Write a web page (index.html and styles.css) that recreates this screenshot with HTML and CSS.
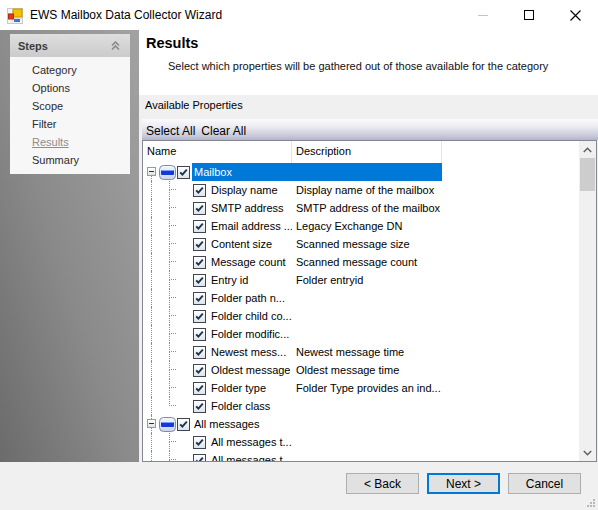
FILE: index.html
```html
<!DOCTYPE html>
<html>
<head>
<meta charset="utf-8">
<title>EWS Mailbox Data Collector Wizard</title>
<link rel="stylesheet" href="styles.css">
</head>
<body>
<div class="window">
  <div class="titlebar">
    <svg class="appicon" width="16" height="16" viewBox="0 0 16 16">
      <rect x="0.5" y="0.5" width="15" height="15" fill="#f4f4f4" stroke="#c9c9c9"/>
      <path d="M0.5 5.5H15.5M0.5 10.5H15.5M5.5 0.5V15.5M10.5 0.5V15.5" stroke="#dcdcdc"/>
      <rect x="6" y="1" width="9" height="8" fill="#f2c200" stroke="#c99700"/>
      <rect x="1.5" y="6" width="5" height="5" fill="#e03a1e" stroke="#b32a12"/>
      <rect x="7" y="11" width="6" height="3" fill="#3a78d8"/>
    </svg>
    <span class="title">EWS Mailbox Data Collector Wizard</span>
    <div class="controls">
      <span class="ctl"><svg width="10" height="10" viewBox="0 0 10 10"><path d="M0 5.5H10" stroke="#c4c4c4"/></svg></span>
      <span class="ctl"><svg width="10" height="10" viewBox="0 0 10 10"><rect x="0.5" y="0.5" width="9" height="9" fill="none" stroke="#000"/></svg></span>
      <span class="ctl"><svg width="11" height="11" viewBox="0 0 11 11"><path d="M0.5 0.5L10.5 10.5M10.5 0.5L0.5 10.5" stroke="#000" stroke-width="1.1"/></svg></span>
    </div>
  </div>

  <div class="main">
    <aside class="sidebar">
      <div class="steps">
        <div class="steps-head">
          <span>Steps</span>
          <svg width="9" height="10" viewBox="0 0 9 10"><path d="M1 4.5L4.5 1L8 4.5M1 8.5L4.5 5L8 8.5" fill="none" stroke="#8a8a8a" stroke-width="1.6"/></svg>
        </div>
        <ul class="steps-list">
          <li>Category</li>
          <li>Options</li>
          <li>Scope</li>
          <li>Filter</li>
          <li class="current">Results</li>
          <li>Summary</li>
        </ul>
      </div>
    </aside>

    <section class="content">
      <div class="page-head">
        <h1>Results</h1>
        <p>Select which properties will be gathered out of those available for the category</p>
      </div>
      <div class="avail">Available Properties</div>
      <div class="toolbar"><span>Select All</span><span>Clear All</span></div>
      <div class="listbox">
        <div class="list-area">
          <div class="colhead">
            <div class="ch ch-name">Name</div>
            <div class="ch ch-desc">Description</div>
          </div>
          <div class="rows">
            <div class="row parent first">
              <span class="root"><span class="seg-top"></span><span class="pbox"></span><span class="seg-bot"></span></span>
              <svg class="nodeicon" width="17" height="15" viewBox="0 0 17 15"><defs><linearGradient id="g1" x1="0" y1="0" x2="0" y2="1"><stop offset="0" stop-color="#f4f7fc"/><stop offset="1" stop-color="#c9d4e8"/></linearGradient></defs><rect x="0.5" y="0.5" width="16" height="14" rx="4" fill="url(#g1)" stroke="#7d8db0"/><rect x="2" y="5" width="13" height="5" rx="1" fill="#1638d8"/><path d="M2.5 5.5H14.5" stroke="#7f9cf5"/></svg>
              <span class="cb"></span>
              <span class="cells sel"><span class="nm">Mailbox</span><span class="ds"></span></span>
            </div>
            <div class="row child"><span class="root"><span class="vl"></span></span><span class="branch"><span class="b-top"></span><span class="b-bot"></span></span><span class="gap"></span><span class="cb"></span><span class="cells"><span class="nm">Display name</span><span class="ds">Display name of the mailbox</span></span></div>
            <div class="row child"><span class="root"><span class="vl"></span></span><span class="branch"><span class="b-top"></span><span class="b-bot"></span></span><span class="gap"></span><span class="cb"></span><span class="cells"><span class="nm">SMTP address</span><span class="ds">SMTP address of the mailbox</span></span></div>
            <div class="row child"><span class="root"><span class="vl"></span></span><span class="branch"><span class="b-top"></span><span class="b-bot"></span></span><span class="gap"></span><span class="cb"></span><span class="cells"><span class="nm">Email address ...</span><span class="ds">Legacy Exchange DN</span></span></div>
            <div class="row child"><span class="root"><span class="vl"></span></span><span class="branch"><span class="b-top"></span><span class="b-bot"></span></span><span class="gap"></span><span class="cb"></span><span class="cells"><span class="nm">Content size</span><span class="ds">Scanned message size</span></span></div>
            <div class="row child"><span class="root"><span class="vl"></span></span><span class="branch"><span class="b-top"></span><span class="b-bot"></span></span><span class="gap"></span><span class="cb"></span><span class="cells"><span class="nm">Message count</span><span class="ds">Scanned message count</span></span></div>
            <div class="row child"><span class="root"><span class="vl"></span></span><span class="branch"><span class="b-top"></span><span class="b-bot"></span></span><span class="gap"></span><span class="cb"></span><span class="cells"><span class="nm">Entry id</span><span class="ds">Folder entryid</span></span></div>
            <div class="row child"><span class="root"><span class="vl"></span></span><span class="branch"><span class="b-top"></span><span class="b-bot"></span></span><span class="gap"></span><span class="cb"></span><span class="cells"><span class="nm">Folder path n...</span><span class="ds"></span></span></div>
            <div class="row child"><span class="root"><span class="vl"></span></span><span class="branch"><span class="b-top"></span><span class="b-bot"></span></span><span class="gap"></span><span class="cb"></span><span class="cells"><span class="nm">Folder child co...</span><span class="ds"></span></span></div>
            <div class="row child"><span class="root"><span class="vl"></span></span><span class="branch"><span class="b-top"></span><span class="b-bot"></span></span><span class="gap"></span><span class="cb"></span><span class="cells"><span class="nm">Folder modific...</span><span class="ds"></span></span></div>
            <div class="row child"><span class="root"><span class="vl"></span></span><span class="branch"><span class="b-top"></span><span class="b-bot"></span></span><span class="gap"></span><span class="cb"></span><span class="cells"><span class="nm">Newest mess...</span><span class="ds">Newest message time</span></span></div>
            <div class="row child"><span class="root"><span class="vl"></span></span><span class="branch"><span class="b-top"></span><span class="b-bot"></span></span><span class="gap"></span><span class="cb"></span><span class="cells"><span class="nm">Oldest message</span><span class="ds">Oldest message time</span></span></div>
            <div class="row child"><span class="root"><span class="vl"></span></span><span class="branch"><span class="b-top"></span><span class="b-bot"></span></span><span class="gap"></span><span class="cb"></span><span class="cells"><span class="nm">Folder type</span><span class="ds">Folder Type provides an ind...</span></span></div>
            <div class="row child last"><span class="root"><span class="vl"></span></span><span class="branch"><span class="b-top"></span><span class="b-bot"></span></span><span class="gap"></span><span class="cb"></span><span class="cells"><span class="nm">Folder class</span><span class="ds"></span></span></div>
            <div class="row parent">
              <span class="root"><span class="seg-top"></span><span class="pbox"></span><span class="seg-bot"></span></span>
              <svg class="nodeicon" width="17" height="15" viewBox="0 0 17 15"><defs><linearGradient id="g2" x1="0" y1="0" x2="0" y2="1"><stop offset="0" stop-color="#f4f7fc"/><stop offset="1" stop-color="#c9d4e8"/></linearGradient></defs><rect x="0.5" y="0.5" width="16" height="14" rx="4" fill="url(#g2)" stroke="#7d8db0"/><rect x="2" y="5" width="13" height="5" rx="1" fill="#1638d8"/><path d="M2.5 5.5H14.5" stroke="#7f9cf5"/></svg>
              <span class="cb"></span>
              <span class="cells"><span class="nm">All messages</span><span class="ds"></span></span>
            </div>
            <div class="row child"><span class="root"><span class="vl"></span></span><span class="branch"><span class="b-top"></span><span class="b-bot"></span></span><span class="gap"></span><span class="cb"></span><span class="cells"><span class="nm">All messages t...</span><span class="ds"></span></span></div>
            <div class="row child"><span class="root"><span class="vl"></span></span><span class="branch"><span class="b-top"></span><span class="b-bot"></span></span><span class="gap"></span><span class="cb"></span><span class="cells"><span class="nm">All messages t</span><span class="ds"></span></span></div>
          </div>
        </div>
        <div class="vscroll">
          <span class="arrow"><svg width="9" height="6" viewBox="0 0 9 6"><path d="M0.8 5L4.5 1.3L8.2 5" fill="none" stroke="#606060" stroke-width="1.5"/></svg></span>
          <span class="thumb"></span>
          <span class="track"></span>
          <span class="arrow"><svg width="9" height="6" viewBox="0 0 9 6"><path d="M0.8 1L4.5 4.7L8.2 1" fill="none" stroke="#606060" stroke-width="1.5"/></svg></span>
        </div>
      </div>
    </section>
  </div>

  <div class="footer">
    <div class="buttons">
      <button class="btn">&lt; Back</button>
      <button class="btn default">Next &gt;</button>
      <button class="btn">Cancel</button>
    </div>
    <svg class="grip" width="8" height="8" viewBox="0 0 8 8"><g fill="#b8b8b8"><rect x="6" y="0" width="2" height="2"/><rect x="3" y="3" width="2" height="2"/><rect x="6" y="3" width="2" height="2"/><rect x="0" y="6" width="2" height="2"/><rect x="3" y="6" width="2" height="2"/><rect x="6" y="6" width="2" height="2"/></g></svg>
  </div>
</div>
</body>
</html>
```

FILE: styles.css
```css
* { box-sizing: border-box; }
html, body { margin: 0; padding: 0; }
body {
  width: 598px;
  height: 510px;
  overflow: hidden;
  background: #f0f0f0;
  font-family: "Liberation Sans", Arial, sans-serif;
  font-size: 11px;
  color: #000;
}
.window { width: 598px; height: 510px; display: flex; flex-direction: column; }

/* title bar */
.titlebar {
  height: 30px;
  flex: none;
  background: #fff;
  display: flex;
  align-items: center;
  padding-left: 7px;
}
.appicon { flex: none; margin-top: 1px; }
.title { margin-left: 7px; font-size: 12px; color: #000; }
.controls { margin-left: auto; display: flex; height: 30px; }
.ctl { width: 46px; height: 30px; display: flex; align-items: center; justify-content: center; }

/* main */
.main { flex: none; height: 432px; display: flex; }
.sidebar {
  width: 139px;
  flex: none;
  background: linear-gradient(to top right, #6b6b6b 0%, #8a8a8a 45%, #a2a2a2 100%);
  padding: 4px 9px 0 10px;
}
.steps { background: #f7f7f7; }
.steps-head {
  height: 23px;
  background: linear-gradient(#dedede, #cbcbcb);
  display: flex;
  align-items: center;
  justify-content: space-between;
  padding: 0 10px 0 8px;
  font-weight: bold;
  font-size: 11px;
  color: #3c3c3c;
}
.steps-list { list-style: none; margin: 0; padding: 4px 0 5px 22px; }
.steps-list li { height: 18px; line-height: 18px; font-size: 11px; color: #2b2b2b; }
.steps-list li.current { color: #8d8d8d; text-decoration: underline; }

.content { flex: 1; display: flex; flex-direction: column; min-width: 0; }
.page-head { height: 65px; flex: none; background: #fff; padding: 5px 0 0 7px; }
.page-head h1 { margin: 0; font-size: 14.5px; font-weight: bold; line-height: 16px; }
.page-head p { margin: 9px 0 0 22px; font-size: 11px; line-height: 13px; color: #111; }
.avail { height: 24px; flex: none; line-height: 21px; padding-left: 6px; font-size: 11px; }
.toolbar {
  height: 21px;
  flex: none;
  margin-left: 3px;
  display: flex;
  align-items: center;
  gap: 6px;
  padding: 2px 0 0 4px;
  font-size: 12px;
  background: linear-gradient(#fbfbfd 0%, #ececf2 35%, #c9c9db 80%, #b3b3cb 100%);
}

.listbox {
  flex: none;
  height: 322px;
  margin: 0 1px 0 3px;
  border: 1px solid #828790;
  background: #fff;
  display: flex;
}
.list-area { flex: 1; overflow: hidden; }
.colhead { height: 22px; display: flex; }
.ch { height: 22px; line-height: 21px; font-size: 11px; padding-left: 4px; }
.ch-name { width: 149px; border-right: 1px solid #e5e5e5; }
.ch-desc { width: 150px; border-right: 1px solid #e5e5e5; }

.rows { display: flex; flex-direction: column; }
.row { height: 18px; display: flex; align-items: center; flex: none; }
.root { width: 16px; height: 18px; flex: none; display: flex; flex-direction: column; }
.vl { margin-left: 8px; height: 18px; border-left: 1px dotted #8c8c8c; }
.seg-top { margin-left: 8px; height: 4px; border-left: 1px dotted #8c8c8c; }
.first .seg-top { border-left-color: transparent; }
.seg-bot { margin-left: 8px; flex: 1; border-left: 1px dotted #8c8c8c; }
.pbox {
  margin-left: 4px;
  width: 9px;
  height: 9px;
  border: 1px solid #919bad;
  background: linear-gradient(#fff, #e0e0e8);
  display: flex;
  align-items: center;
  justify-content: center;
}
.pbox::before { content: ""; width: 5px; height: 1px; background: #1d2d6a; }
.nodeicon { flex: none; }
.branch { width: 17px; height: 18px; flex: none; display: flex; flex-direction: column; padding-left: 10px; }
.b-top { height: 9px; border-left: 1px dotted #8c8c8c; border-bottom: 1px dotted #8c8c8c; }
.b-bot { height: 9px; border-left: 1px dotted #8c8c8c; }
.last .b-bot { border-left-color: transparent; }
.gap { width: 17px; flex: none; }
.cb {
  width: 13px;
  height: 13px;
  flex: none;
  border: 1px solid #3d4550;
  background:
    url("data:image/svg+xml;utf8,<svg xmlns='http://www.w3.org/2000/svg' width='11' height='11' viewBox='0 0 11 11'><path d='M2.2 5.4L4.4 7.7L8.8 2.6' fill='none' stroke='%23173552' stroke-width='1.9'/></svg>") center / 11px 11px no-repeat,
    linear-gradient(#ffffff, #dfe3e8);
}
.parent .cb { margin-left: 1px; }
.cells { display: flex; height: 18px; align-items: center; flex: none; }
.parent .cells { margin-left: 2px; width: 250px; }
.child .cells { margin-left: 2px; width: 234px; }
.parent .nm { width: 100px; padding-left: 2px; }
.child .nm { width: 84px; padding-left: 3px; }
.nm, .ds { white-space: nowrap; overflow: hidden; font-size: 11px; line-height: 18px; }
.ds { width: 150px; padding-left: 4px; }
.cells.sel { background: #0078d7; color: #fff; }

.vscroll { width: 17px; flex: none; background: #f0f0f0; display: flex; flex-direction: column; }
.arrow { height: 17px; flex: none; display: flex; align-items: center; justify-content: center; }
.thumb { height: 33px; flex: none; margin: 0 1px; background: #cdcdcd; }
.track { flex: 1; }

/* footer */
.footer { flex: 1; display: flex; align-items: flex-start; padding-top: 11px; }
.buttons { margin-left: 346px; display: flex; gap: 8px; }
.btn {
  width: 73px;
  height: 21px;
  border: 1px solid #adadad;
  background: #e1e1e1;
  font-family: "Liberation Sans", Arial, sans-serif;
  font-size: 12px;
  color: #000;
  padding: 0;
}
.btn.default { border: 2px solid #0078d7; }
.grip { align-self: flex-end; margin: 0 3px 3px auto; }
```
